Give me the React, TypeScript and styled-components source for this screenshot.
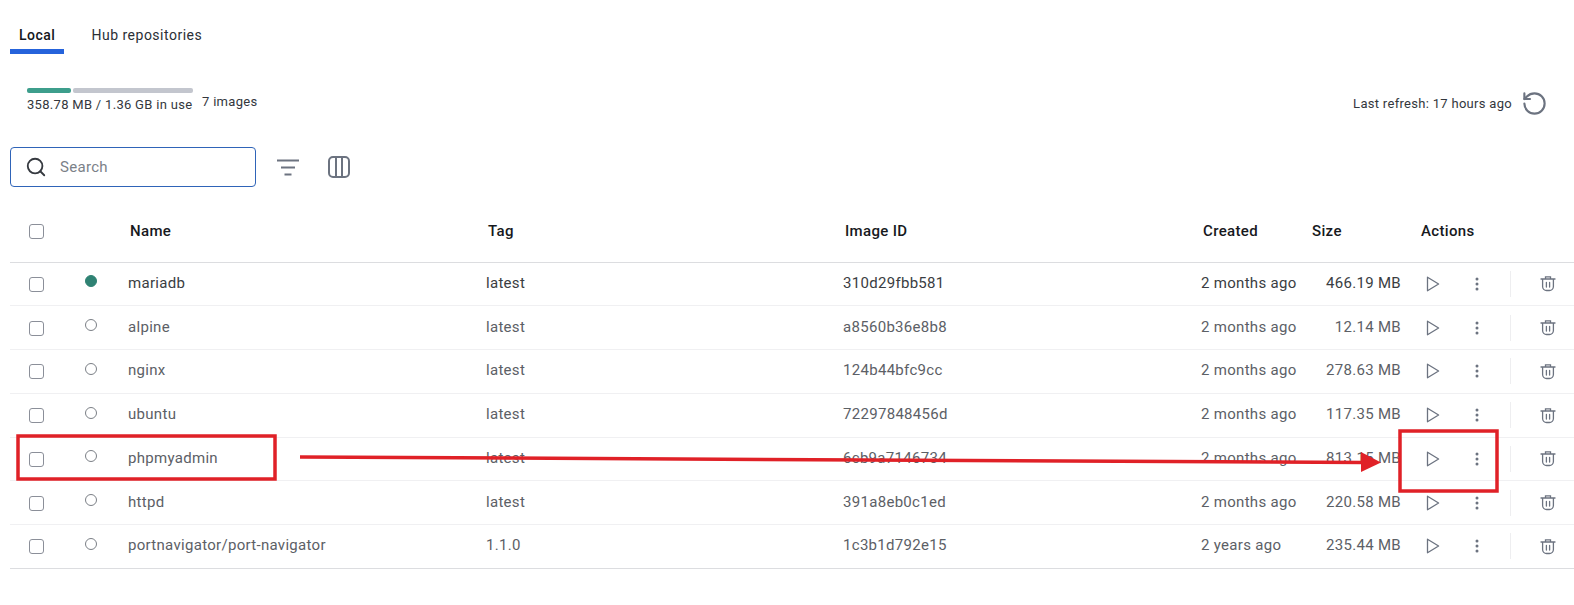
import { Search, RotateCcw } from 'lucide-react';
import styled, { createGlobalStyle } from 'styled-components';

const GlobalStyle = createGlobalStyle`
  html, body {
    margin: 0;
    padding: 0;
    background: #fff;
    overflow: hidden;
  }
  body {
    font-family: Roboto, "Liberation Sans", sans-serif;
    font-size: 15px;
    color: #333;
  }
`;

const Page = styled.div`
  position: relative;
  width: 1574px;
  height: 605px;
  padding-left: 10px;
  box-sizing: border-box;
`;

const Tabs = styled.div`
  display: flex;
  height: 54px;
`;

const Tab = styled.div<{ $active?: boolean }>`
  height: 54px;
  box-sizing: border-box;
  padding: 27px 9px 0;
  margin-right: 18px;
  line-height: 17px;
  font-size: 14px;
  letter-spacing: 0.5px;
  font-weight: ${(p) => (p.$active ? 500 : 400)};
  color: ${(p) => (p.$active ? '#14171c' : '#2b2f36')};
  border-bottom: ${(p) => (p.$active ? '5px solid #2563db' : 'none')};
`;

const StorageRow = styled.div`
  display: flex;
  justify-content: space-between;
  align-items: flex-start;
  height: 93px;
  padding: 34px 26px 0 17px;
  box-sizing: border-box;
`;

const StorageInfo = styled.div`
  display: flex;
  align-items: flex-start;
`;

const StorageUsage = styled.div`
  width: 166px;
`;

const UsageBar = styled.div`
  display: flex;
  gap: 2px;
  height: 5px;
`;

const UsageSegment = styled.div<{ $color: string; $grow: number }>`
  flex: ${(p) => p.$grow} 0 0;
  background: ${(p) => p.$color};
  border-radius: 2px;
`;

const SmallText = styled.div`
  font-size: 13px;
  line-height: 14px;
  letter-spacing: 0.3px;
  color: #33373d;
  white-space: nowrap;
`;

const UsageLabel = styled(SmallText)`
  margin-top: 5px;
`;

const ImageCount = styled(SmallText)`
  margin: 7px 0 0 9px;
`;

const RefreshBox = styled.div`
  display: flex;
  align-items: center;
  gap: 9px;
  margin-top: 2px;
  color: #6c7380;
`;

const Toolbar = styled.div`
  display: flex;
  align-items: center;
  height: 40px;
`;

const SearchBox = styled.div`
  display: flex;
  align-items: center;
  width: 246px;
  height: 40px;
  box-sizing: border-box;
  padding-left: 14px;
  border: 1px solid #2f64b8;
  border-radius: 4px;
  color: #363a40;
`;

const SearchText = styled.span`
  margin-left: 13px;
  color: #7b8188;
  letter-spacing: 0.3px;
`;

const ToolIcon = styled.svg`
  display: block;
  color: #6c7380;
`;

const FilterIcon = styled(ToolIcon)`
  margin-left: 20px;
`;

const ColumnsIcon = styled(ToolIcon)`
  margin-left: 27px;
`;

const Table = styled.div`
  margin-top: 22px;
`;

const columns = '66px 52px 358px 357px 358px 111px 89px 173px';

const HeaderRow = styled.div`
  display: grid;
  grid-template-columns: ${columns};
  align-items: center;
  height: 53.5px;
  box-sizing: border-box;
  padding-bottom: 8px;
  border-bottom: 1px solid #dcdde0;
`;

const HeaderCell = styled.div`
  padding-left: 2px;
  font-weight: 500;
  letter-spacing: 0.35px;
  color: #17191d;
`;

const SizeHeader = styled(HeaderCell)`
  padding-left: 0;
`;

const ActionsHeader = styled(HeaderCell)`
  padding-left: 20px;
`;

const Row = styled.div<{ $last?: boolean }>`
  display: grid;
  grid-template-columns: ${columns};
  align-items: center;
  height: 43.75px;
  box-sizing: border-box;
  border-bottom: 1px solid ${(p) => (p.$last ? '#dcdde0' : '#f0f0f2')};
`;

const CheckCell = styled.div`
  padding-left: 19px;
`;

const Checkbox = styled.div`
  width: 15px;
  height: 15px;
  box-sizing: border-box;
  margin-top: 1px;
  border: 1.3px solid #8b8f99;
  border-radius: 3px;
`;

const Status = styled.div<{ $running?: boolean }>`
  width: 12px;
  height: 12px;
  box-sizing: border-box;
  margin: -5px 0 0 9px;
  border-radius: 50%;
  border: 1px solid ${(p) => (p.$running ? '#2f8273' : '#7b7f86')};
  background: ${(p) => (p.$running ? '#2f8273' : 'transparent')};
`;

const Cell = styled.div<{ $running?: boolean }>`
  letter-spacing: 0.3px;
  margin-top: -2px;
  color: ${(p) => (p.$running ? '#3a3d42' : '#5c6066')};
  white-space: nowrap;
`;

const SizeCell = styled(Cell)`
  text-align: right;
`;

const Actions = styled.div`
  display: flex;
  align-items: center;
`;

const ActionIcon = styled.svg`
  display: block;
  flex: none;
  color: #6c7380;
`;

const PlayIcon = styled(ActionIcon)`
  margin-left: 25px;
`;

const MoreIcon = styled(ActionIcon)`
  margin-left: 35px;
`;

const Divider = styled.div`
  width: 1px;
  height: 26px;
  margin-left: 31px;
  background: #eeeef0;
`;

const TrashIcon = styled(ActionIcon)`
  margin-left: 29px;
`;

const Annotation = styled.svg`
  position: absolute;
  left: 0;
  top: 0;
  pointer-events: none;
`;

const images = [
  { name: 'mariadb', tag: 'latest', id: '310d29fbb581', created: '2 months ago', size: '466.19 MB', running: true },
  { name: 'alpine', tag: 'latest', id: 'a8560b36e8b8', created: '2 months ago', size: '12.14 MB' },
  { name: 'nginx', tag: 'latest', id: '124b44bfc9cc', created: '2 months ago', size: '278.63 MB' },
  { name: 'ubuntu', tag: 'latest', id: '72297848456d', created: '2 months ago', size: '117.35 MB' },
  { name: 'phpmyadmin', tag: 'latest', id: '6cb9a7146734', created: '2 months ago', size: '813.15 MB' },
  { name: 'httpd', tag: 'latest', id: '391a8eb0c1ed', created: '2 months ago', size: '220.58 MB' },
  { name: 'portnavigator/port-navigator', tag: '1.1.0', id: '1c3b1d792e15', created: '2 years ago', size: '235.44 MB' },
];

export default function App() {
  return (
    <Page>
      <GlobalStyle />
      <Tabs>
        <Tab $active>Local</Tab>
        <Tab>Hub repositories</Tab>
      </Tabs>
      <StorageRow>
        <StorageInfo>
          <StorageUsage>
            <UsageBar>
              <UsageSegment $color="#3d9e8c" $grow={44} />
              <UsageSegment $color="#c3c6ce" $grow={120} />
            </UsageBar>
            <UsageLabel>358.78 MB / 1.36 GB in use</UsageLabel>
          </StorageUsage>
          <ImageCount>7 images</ImageCount>
        </StorageInfo>
        <RefreshBox>
          <SmallText>Last refresh: 17 hours ago</SmallText>
          <RotateCcw size={27} strokeWidth={1.9} />
        </RefreshBox>
      </StorageRow>
      <Toolbar>
        <SearchBox>
          <Search size={22} strokeWidth={2} />
          <SearchText>Search</SearchText>
        </SearchBox>
        <FilterIcon width="24" height="24" viewBox="0 0 24 24" fill="none" stroke="currentColor" strokeWidth="2">
          <path d="M1 5.5h22M5 12.5h14M8.5 19.5h7" />
        </FilterIcon>
        <ColumnsIcon width="24" height="24" viewBox="0 0 24 24" fill="none" stroke="currentColor" strokeWidth="2">
          <rect x="2" y="2" width="20" height="20" rx="4" />
          <path d="M9 2v20M15 2v20" />
        </ColumnsIcon>
      </Toolbar>
      <Table>
        <HeaderRow>
          <CheckCell><Checkbox /></CheckCell>
          <div />
          <HeaderCell>Name</HeaderCell>
          <HeaderCell>Tag</HeaderCell>
          <HeaderCell>Image ID</HeaderCell>
          <HeaderCell>Created</HeaderCell>
          <SizeHeader>Size</SizeHeader>
          <ActionsHeader>Actions</ActionsHeader>
        </HeaderRow>
        {images.map((image, i) => (
          <Row key={image.name} $last={i === images.length - 1}>
            <CheckCell><Checkbox /></CheckCell>
            <Status $running={image.running} />
            <Cell $running={image.running}>{image.name}</Cell>
            <Cell $running={image.running}>{image.tag}</Cell>
            <Cell $running={image.running}>{image.id}</Cell>
            <Cell $running={image.running}>{image.created}</Cell>
            <SizeCell $running={image.running}>{image.size}</SizeCell>
            <Actions>
              <PlayIcon width="14" height="16" viewBox="0 0 14 16" fill="none" stroke="currentColor" strokeWidth="1.3" strokeLinejoin="round">
                <path d="M1.5 1.2v13.6L12.6 8z" />
              </PlayIcon>
              <MoreIcon width="4" height="14" viewBox="0 0 4 14" fill="currentColor">
                <circle cx="2" cy="2" r="1.5" />
                <circle cx="2" cy="7" r="1.5" />
                <circle cx="2" cy="12" r="1.5" />
              </MoreIcon>
              <Divider />
              <TrashIcon width="16" height="17" viewBox="0 0 16 17" fill="none" stroke="currentColor" strokeWidth="1.3" strokeLinecap="round">
                <path d="M1 4h14M5.5 4V1.8h5V4M2.6 4v7.5A4 4 0 0 0 6.6 15.5h2.8a4 4 0 0 0 4-4V4M6.4 7.5v4.5M9.6 7.5v4.5" />
              </TrashIcon>
            </Actions>
          </Row>
        ))}
      </Table>
      <Annotation width="1574" height="605" viewBox="0 0 1574 605" fill="none">
        <rect x="18" y="436" width="257" height="43" stroke="#e02127" strokeWidth="3.5" />
        <rect x="1400" y="431" width="97" height="60" stroke="#e02127" strokeWidth="3.5" />
        <path d="M300 457L1364 462.5" stroke="#e02127" strokeWidth="3.5" />
        <path d="M1361 452L1381 462.5L1361 472z" fill="#e02127" />
      </Annotation>
    </Page>
  );
}
